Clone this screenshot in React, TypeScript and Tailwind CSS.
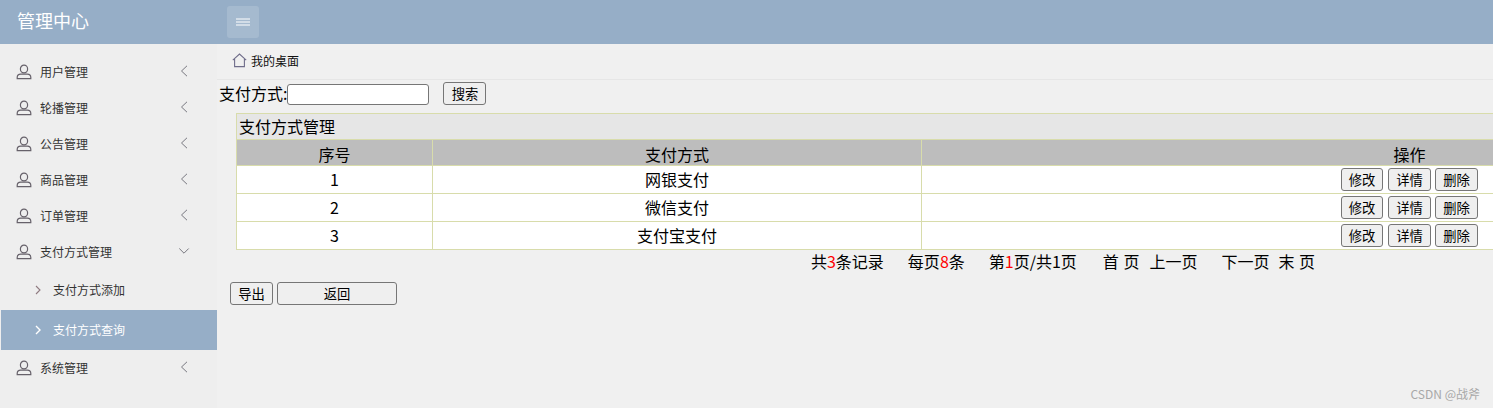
import { ReactNode } from "react";

const menuTop = ["用户管理", "轮播管理", "公告管理", "商品管理", "订单管理"];
const payRows = [
  { id: 1, name: "网银支付" },
  { id: 2, name: "微信支付" },
  { id: 3, name: "支付宝支付" },
];

function UserIcon() {
  return (
    <svg width="16" height="16" viewBox="0 0 16 16" fill="none" stroke="#66616a" strokeWidth="1.2" className="shrink-0">
      <ellipse cx="8" cy="5" rx="3.6" ry="3.9" />
      <path d="M1.2 14.6v-1c0-2 1.6-3.4 3.5-3.4h6.6c1.9 0 3.5 1.4 3.5 3.4v1z" />
    </svg>
  );
}

function MenuItem({ label, open }: { label: string; open?: boolean }) {
  return (
    <div className="h-9 flex items-center pl-4 text-xs text-[#333]">
      <UserIcon />
      <span className="ml-2 flex-1">{label}</span>
      {open ? (
        <svg width="12" height="8" viewBox="0 0 12 8" fill="none" stroke="#77777f" strokeWidth="1" className="mr-[27px] mb-[3px]">
          <path d="M1.3 1.5L6 6.2l4.7-4.7" />
        </svg>
      ) : (
        <svg width="8" height="12" viewBox="0 0 8 12" fill="none" stroke="#77777f" strokeWidth="1" className="mr-[29px] mb-[2px]">
          <path d="M7 .8L1.5 6 7 11.2" />
        </svg>
      )}
    </div>
  );
}

function SubItem({ label, active }: { label: string; active?: boolean }) {
  return (
    <div className={`h-10 ml-px flex items-center pl-[34px] text-xs ${active ? "bg-[#96aec7] text-white" : "text-[#333]"}`}>
      <svg width="6" height="10" viewBox="0 0 6 10" fill="none" stroke={active ? "#fff" : "#8f7a80"} strokeWidth={active ? 1.4 : 1.1} className="shrink-0">
        <path d="M1 1l4 4-4 4" />
      </svg>
      <span className="ml-3">{label}</span>
    </div>
  );
}

function Btn({ children, className = "" }: { children: ReactNode; className?: string }) {
  return (
    <button className={`h-[23px] w-[43px] shrink-0 bg-[#efefef] border border-[#767676] rounded-[3px] text-[13.33px] leading-none text-black ${className}`}>
      {children}
    </button>
  );
}

function Cell({ children, className = "" }: { children: ReactNode; className?: string }) {
  return <td className={`border border-[#d8dcab] text-center align-middle p-0 ${className}`}>{children}</td>;
}

export default function App() {
  return (
    <div className="w-[1493px] h-[408px] overflow-hidden bg-[#f0f0f0] text-black font-['Noto_Sans_CJK_SC','Liberation_Sans',sans-serif] relative">
      {/* Header */}
      <header className="h-11 bg-[#96aec7] flex items-center">
        <div className="w-[227px] pl-[17px] pb-1 text-lg text-white">管理中心</div>
        <div className="w-8 h-8 rounded-[3px] bg-[#a5bacf] flex items-center justify-center">
          <svg width="16" height="8" viewBox="0 0 16 8" stroke="#fff" strokeWidth="1">
            <path d="M1 1h14M1 4h14M1 7h14" />
          </svg>
        </div>
      </header>

      <div className="flex h-[364px]">
        {/* Sidebar */}
        <aside className="w-[217px] shrink-0 bg-[#eeeeee] pt-[10px]">
          {menuTop.map((m) => (
            <MenuItem key={m} label={m} />
          ))}
          <MenuItem label="支付方式管理" open />
          <SubItem label="支付方式添加" />
          <SubItem label="支付方式查询" active />
          <MenuItem label="系统管理" />
        </aside>

        {/* Content */}
        <main className="flex-1 min-w-0">
          <div className="h-9 border-b border-[#e6e6e6] flex items-center pl-[15px] pb-[2px] text-xs">
            <svg width="15" height="15" viewBox="0 0 15 15" fill="none" stroke="#6f6d8a" strokeWidth="1.1">
              <path d="M.8 7.2L7.5 1l6.7 6.2M2.6 6v7.6h9.8V6" />
            </svg>
            <span className="ml-[4px] text-[#111]">我的桌面</span>
          </div>

          <div className="h-[33px] flex items-start pt-[2px] pl-[2px] text-base">
            <span className="mt-[-1px]">支付方式:</span>
            <input className="w-[142px] h-[21px] mt-[2px] bg-white border border-[#767676] rounded-[3px]" />
            <Btn className="ml-[14px]">搜索</Btn>
          </div>

          <table className="ml-[19px] w-[1662px] table-fixed border-collapse text-base">
            <colgroup>
              <col className="w-[196px]" />
              <col className="w-[489px]" />
              <col />
            </colgroup>
            <thead>
              <tr className="h-[26px] bg-[#e6e6e6]">
                <th colSpan={3} className="border border-[#d8dcab] text-left font-normal pl-[2px] p-0 leading-[22px] pb-[2px]">
                  支付方式管理
                </th>
              </tr>
              <tr className="h-[26px] bg-[#bdbdbd]">
                <th className="border border-[#d8dcab] font-normal p-0 pt-[2px] leading-[22px]">序号</th>
                <th className="border border-[#d8dcab] font-normal p-0 pt-[2px] leading-[22px]">支付方式</th>
                <th className="border border-[#d8dcab] font-normal p-0 pt-[2px] leading-[22px]">操作</th>
              </tr>
            </thead>
            <tbody>
              {payRows.map((row) => (
                <tr key={row.id} className="h-7 bg-white">
                  <Cell className="pb-[2px]">{row.id}</Cell>
                  <Cell className="pb-[2px]">{row.name}</Cell>
                  <Cell>
                    <div className="flex justify-center">
                      <Btn className="!w-[42px]">修改</Btn>
                      <Btn className="ml-[5px]">详情</Btn>
                      <Btn className="ml-1">删除</Btn>
                    </div>
                  </Cell>
                </tr>
              ))}
            </tbody>
          </table>

          <div className="w-[1692px] h-[22px] flex justify-center items-center text-base whitespace-nowrap pb-px">
            <span>共<span className="text-[#ff0000]">3</span>条记录</span>
            <span className="ml-6">每页<span className="text-[#ff0000]">8</span>条</span>
            <span className="ml-6">第<span className="text-[#ff0000]">1</span>页/共1页</span>
            <span className="ml-[26px] [word-spacing:1px]">首 页</span>
            <span className="ml-[10px]">上一页</span>
            <span className="ml-6">下一页</span>
            <span className="ml-[9px] [word-spacing:1px]">末 页</span>
          </div>

          <div className="flex gap-1 pl-[13px] mt-[10px]">
            <Btn>导出</Btn>
            <Btn className="!w-[120px]">返回</Btn>
          </div>
        </main>
      </div>

      <div className="absolute right-[13px] bottom-[6px] text-xs text-[#a8a8a8]">CSDN @战斧</div>
    </div>
  );
}
